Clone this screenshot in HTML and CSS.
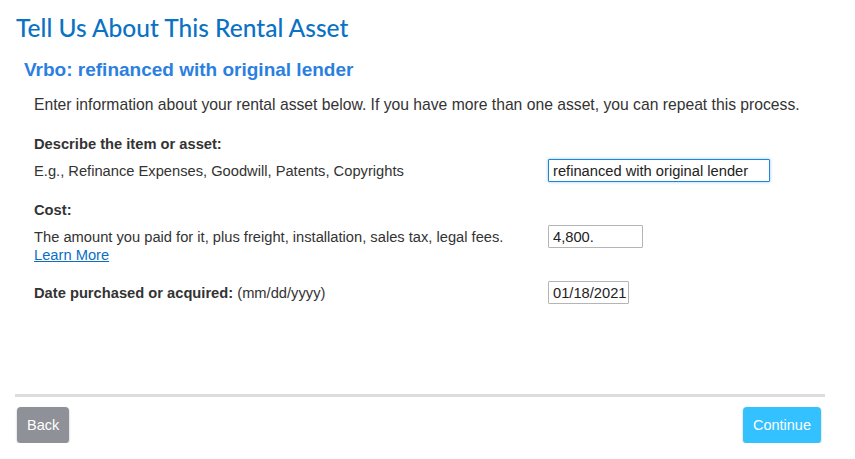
FILE: index.html
```html
<!DOCTYPE html>
<html lang="en">
<head>
    <meta charset="UTF-8">
    <title>Tell Us About This Rental Asset</title>
    <link rel="stylesheet" href="styles.css">
</head>
<body>
    <div class="page">
        <h1 class="title">Tell Us About This Rental Asset</h1>
        <h2 class="subtitle">Vrbo: refinanced with original lender</h2>
        <p class="intro">Enter information about your rental asset below. If you have more than one asset, you can repeat this process.</p>

        <div class="field">
            <div class="label">Describe the item or asset:</div>
            <div class="row">
                <div class="help">E.g., Refinance Expenses, Goodwill, Patents, Copyrights</div>
                <input type="text" class="input input-desc focused" value="refinanced with original lender">
            </div>
        </div>

        <div class="field">
            <div class="label">Cost:</div>
            <div class="row">
                <div class="help">The amount you paid for it, plus freight, installation, sales tax, legal fees.<br><a href="#">Learn More</a></div>
                <input type="text" class="input input-cost" value="4,800.">
            </div>
        </div>

        <div class="field field-date">
            <div class="row">
                <div class="help"><b>Date purchased or acquired:</b> (mm/dd/yyyy)</div>
                <input type="text" class="input input-date" value="01/18/2021">
            </div>
        </div>

        <div class="footer">
            <button class="btn btn-back">Back</button>
            <button class="btn btn-continue">Continue</button>
        </div>
    </div>
</body>
</html>
```

FILE: styles.css
```css
body {
    margin: 0;
    font-family: "Liberation Sans", Arial, sans-serif;
    color: #333;
    background-color: #fff;
}
.page {
    width: 810px;
    padding: 13px 0 0 15px;
}
.title {
    margin: 0;
    font-family: Lato, "Open Sans", sans-serif;
    font-weight: 500;
    font-size: 24.5px;
    line-height: 30px;
    color: #0a72c4;
    padding-left: 1px;
}
.subtitle {
    margin: 15px 0 0 9px;
    font-size: 19px;
    line-height: 24px;
    font-weight: bold;
    color: #2b7fe0;
}
.intro {
    margin: 13px 0 0 19px;
    font-size: 15.7px;
    line-height: 20px;
}
.field {
    margin: 20px 0 0 19px;
}
.intro + .field {
    margin-top: 19px;
}
.field-date {
    margin-top: 20px;
}
.label {
    font-weight: bold;
    font-size: 14.7px;
    line-height: 20px;
    margin-bottom: 8px;
}
.row {
    display: flex;
    align-items: flex-start;
}
.help {
    width: 514px;
    font-size: 14.7px;
    line-height: 18px;
}
.help a {
    color: #0a6fc2;
}
.input {
    font-family: "Liberation Sans", Arial, sans-serif;
    font-size: 14.7px;
    color: #222;
    height: 23px;
    box-sizing: border-box;
    border: 1px solid #b5b5b5;
    border-radius: 1px;
    padding: 0 1px 0 4px;
    margin: -3px 0 -3px 0;
}
.focused {
    border-color: #1a8ad8;
    box-shadow: 0 0 3px rgba(26,138,216,0.5);
}
.input-desc { width: 222px; }
.input-cost { width: 95px; }
.input-date { width: 81px; }
.footer {
    margin-top: 92px;
    border-top: 3px solid #ddd;
    padding-top: 10px;
    display: flex;
    justify-content: space-between;
}
.btn {
    font-family: "Liberation Sans", Arial, sans-serif;
    font-size: 14.5px;
    color: #fff;
    border: none;
    border-radius: 4px;
    height: 36px;
    padding: 0 10px;
    box-shadow: 0 1px 2px rgba(0,0,0,0.3);
}
.btn-back {
    background-color: #8e9197;
    margin-left: 2px;
}
.btn-continue {
    background-color: #33c1ff;
    margin-right: 4px;
}
```
